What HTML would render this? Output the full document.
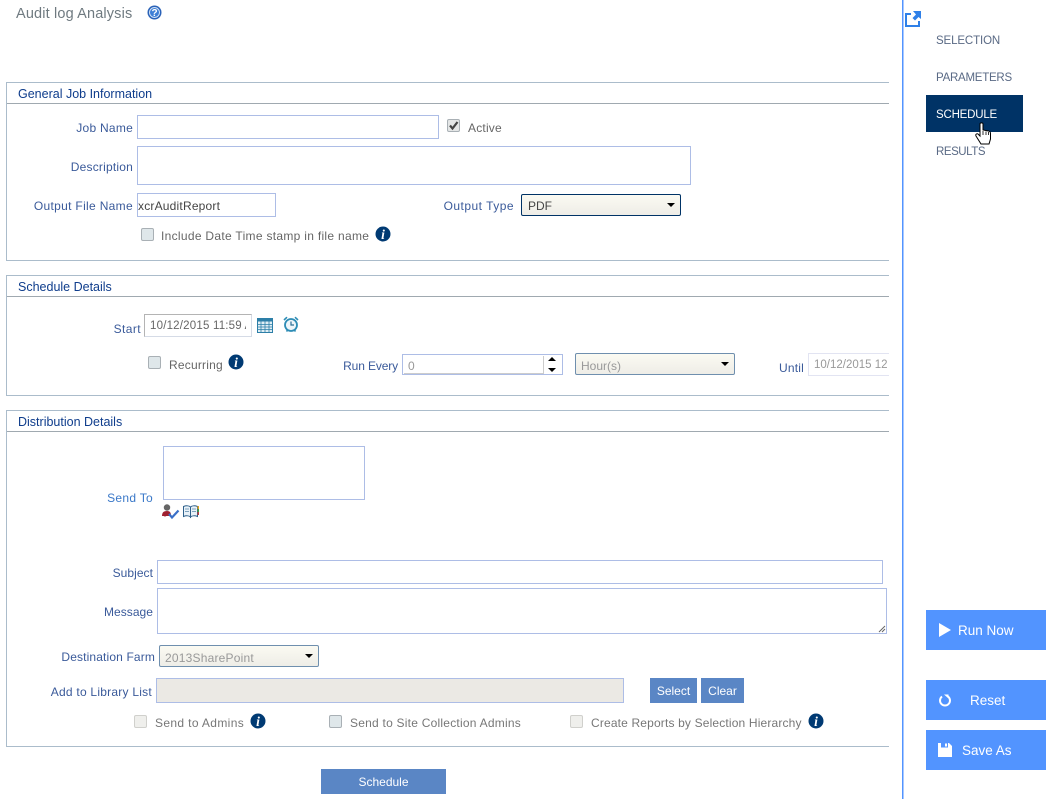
<!DOCTYPE html>
<html><head><meta charset="utf-8"><style>
html,body{margin:0;padding:0;background:#fff}
body{width:1054px;height:799px;position:relative;overflow:hidden;font-family:"Liberation Sans",sans-serif;font-size:12px;color:#555}
.t{position:absolute;white-space:nowrap;line-height:16px;height:16px}
.l{color:#3a5a9a;text-align:right}
.g{color:#666}
.h{color:#0f3d8c;font-size:12.5px}
.b{position:absolute;box-sizing:border-box;border:1px solid #adbde6;background:#fff}
.sec{position:absolute;left:6px;width:883px;box-sizing:border-box;border:1px solid #abbccb;border-right:0}
.hl{position:absolute;left:0;right:0;height:1px;background:#a0a9b0}
.cb{position:absolute;box-sizing:border-box;width:13px;height:13px;border:1px solid #a9b0b5;border-radius:2px;background:#dfe7ea}
.cb.d{background:#efefec;border-color:#d0d0cc}
.sel{position:absolute;box-sizing:border-box;border:1px solid #003366;border-radius:2px;background:linear-gradient(#fbfaf2,#eeede7);height:22px}
.sel.o{border-color:#6f8fae}
.arr{position:absolute;right:5px;top:8px;width:0;height:0;border:4px solid transparent;border-top:4px solid #000;border-bottom:0}
.btn{position:absolute;background:#5a86c5;color:#fff;text-align:center;font-size:12px}
.side{position:absolute;left:926px;width:120px;height:40px;background:#5294ff;color:#fff;font-size:13.5px;line-height:41px}
.side span{position:absolute;top:0;white-space:nowrap}
svg{position:absolute;overflow:visible}
.nav{position:absolute;left:936px;color:#5a6a85;font-size:11.5px;line-height:16px;white-space:nowrap}
</style></head><body>

<div class="t" style="left:16px;top:5px;font-size:14.5px;line-height:18px;height:18px;color:#6f7a80;letter-spacing:.15px">Audit log Analysis</div>
<svg style="left:147px;top:5px" width="15" height="15" viewBox="0 0 15 15"><circle cx="7.5" cy="7.5" r="7" fill="#2a62b8"/><circle cx="7.5" cy="7.5" r="5" fill="#3f7fd6" stroke="#cfe0f5" stroke-width="1"/><text x="7.5" y="11" text-anchor="middle" font-size="10" font-weight="700" fill="#fff" font-family="Liberation Sans">?</text></svg>

<!-- Section 1 -->
<div class="sec" style="top:82px;height:179px"><div class="hl" style="top:20px"></div></div>
<div class="t h" style="left:18px;top:86px">General Job Information</div>
<div class="t l" style="right:921px;top:120px;letter-spacing:.25px">Job Name</div>
<div class="b" style="left:137px;top:115px;width:302px;height:24px"></div>
<div class="cb" style="left:447px;top:119px;background:#e4e6e6"></div>
<svg style="left:447px;top:119px" width="13" height="13" viewBox="0 0 13 13"><path d="M3 6.5 L5.500 9.500 L10.500 3" fill="none" stroke="#444" stroke-width="2.2"/></svg>
<div class="t g" style="left:468px;top:120px;letter-spacing:.2px">Active</div>
<div class="t l" style="right:921px;top:159px;letter-spacing:.2px">Description</div>
<div class="b" style="left:137px;top:146px;width:554px;height:39px"></div>
<div class="t l" style="right:921px;top:198px;letter-spacing:.32px">Output File Name</div>
<div class="b" style="left:137px;top:193px;width:139px;height:24px"></div>
<div class="t" style="left:138px;top:198px;color:#444;letter-spacing:.2px">xcrAuditReport</div>
<div class="t l" style="right:540px;top:198px;letter-spacing:.48px">Output Type</div>
<div class="sel" style="left:521px;top:194px;width:160px"><div class="t" style="left:6px;top:3px;color:#444">PDF</div><div class="arr"></div></div>
<div class="cb" style="left:141px;top:228px"></div>
<div class="t g" style="left:161px;top:228px;letter-spacing:.3px">Include Date Time stamp in file name</div>
<svg style="left:375px;top:226px" width="16" height="16" viewBox="0 0 16 16"><circle cx="8" cy="8" r="7.500" fill="#003a73"/><text x="8" y="12.800" text-anchor="middle" font-size="13.500" font-weight="700" font-style="italic" fill="#fff" font-family="Liberation Serif">i</text></svg>

<!-- Section 2 -->
<div class="sec" style="top:275px;height:121px"><div class="hl" style="top:20px"></div></div>
<div class="t h" style="left:18px;top:279px">Schedule Details</div>
<div class="t l" style="right:913px;top:321px;letter-spacing:.4px">Start</div>
<div class="b" style="left:144px;top:314px;width:108px;height:23px;border-color:#b4b4b4 #d5dbe6 #d5dbe6 #b4b4b4"><div style="position:absolute;left:5px;top:3px;width:96px;height:16px;overflow:hidden"><div class="t" style="left:0;top:0;color:#666;font-size:11.5px;letter-spacing:.2px">10/12/2015 11:59 A</div></div></div>
<svg style="left:257px;top:318px" width="16" height="15" viewBox="0 0 16 15"><rect x=".5" y=".5" width="15" height="14" fill="#dfeef5" stroke="#2d7fa8"/><rect x=".5" y=".5" width="15" height="3" fill="#2d7fa8"/><path d="M4 3.500V14M8 3.500V14M12 3.500V14M1 6.500H15M1 9H15M1 11.500H15" stroke="#2d7fa8" stroke-width=".8"/></svg>
<svg style="left:283px;top:316px" width="16" height="17" viewBox="0 0 16 17"><circle cx="8" cy="9" r="6" fill="#eef6fa" stroke="#2d8cb5" stroke-width="1.800"/><path d="M8 5.500V9H11" fill="none" stroke="#2d6f95" stroke-width="1.200"/><path d="M1 4 L4 1.200M15 4 L12 1.200M3.500 15.500l1.500-2M12.500 15.500l-1.500-2" stroke="#2d8cb5" stroke-width="1.600"/></svg>
<div class="cb" style="left:148px;top:356px"></div>
<div class="t g" style="left:169px;top:357px;letter-spacing:.2px">Recurring</div>
<svg style="left:228px;top:354px" width="16" height="16" viewBox="0 0 16 16"><circle cx="8" cy="8" r="7.500" fill="#003a73"/><text x="8" y="12.800" text-anchor="middle" font-size="13.500" font-weight="700" font-style="italic" fill="#fff" font-family="Liberation Serif">i</text></svg>
<div class="t l" style="right:656px;top:358px;letter-spacing:-.13px">Run Every</div>
<div class="b" style="left:402px;top:354px;width:161px;height:21px;border-color:#adbde6"></div>
<div style="position:absolute;left:404px;top:356px;width:139px;height:17px;border:0 solid #ccc;border-bottom:1px solid #ccc;border-right:1px solid #ccc"></div>
<div class="t" style="left:408px;top:358px;color:#999">0</div>
<div style="position:absolute;left:548px;top:357px;border:4px solid transparent;border-bottom:4px solid #000;border-top:0;width:0;height:0"></div>
<div style="position:absolute;left:548px;top:368px;border:4px solid transparent;border-top:4px solid #000;border-bottom:0;width:0;height:0"></div>
<div class="sel o" style="left:575px;top:353px;width:160px"><div class="t" style="left:5px;top:4px;color:#999">Hour(s)</div><div class="arr"></div></div>
<div class="t l" style="right:250px;top:360px;letter-spacing:.2px">Until</div>
<div class="b" style="left:808px;top:353px;width:81px;height:23px;border-color:#e2e4f2;border-right:0;overflow:hidden"><div class="t" style="left:5px;top:3px;color:#999;font-size:11.500px">10/12/2015 12</div></div>

<!-- Section 3 -->
<div class="sec" style="top:410px;height:337px"><div class="hl" style="top:20px"></div></div>
<div class="t h" style="left:18px;top:414px">Distribution Details</div>
<div class="t l" style="right:901px;top:490px;letter-spacing:.3px;color:#3a78c8">Send To</div>
<div class="b" style="left:163px;top:446px;width:202px;height:54px"></div>
<svg style="left:162px;top:504px" width="18" height="15" viewBox="0 0 18 15"><circle cx="5" cy="3.500" r="3.200" fill="#666"/><path d="M0 12c0-3.500 2-5 5-5s4 1.500 4 5z" fill="#a02030"/><circle cx="3" cy="10" r="2.500" fill="#a02030"/><path d="M7 10l3 3.500 6.500-7" fill="none" stroke="#3a6fc8" stroke-width="2.200"/></svg>
<svg style="left:183px;top:505px" width="16" height="13" viewBox="0 0 16 13"><path d="M.5 1.500C3 .5 6 .5 7.500 2v10C6 10.500 3 10.500 .5 11.500zM14.500 1.500C12 .5 9 .5 7.500 2v10c1.500-1.500 4.500-1.500 7-.5z" fill="#e8f1f8" stroke="#2d5f8a"/><path d="M2 4h4M2 6.500h4M9 4h4M9 6.500h4" stroke="#5a86a8" stroke-width=".8"/><rect x="14.500" y="1" width="1.500" height="3" fill="#e0a020"/><rect x="14.500" y="4" width="1.500" height="3" fill="#40a040"/><rect x="14.500" y="7" width="1.500" height="3" fill="#c04040"/></svg>
<div class="t l" style="right:901px;top:565px;letter-spacing:.05px">Subject</div>
<div class="b" style="left:157px;top:560px;width:726px;height:24px"></div>
<div class="t l" style="right:901px;top:604px;letter-spacing:.05px">Message</div>
<div class="b" style="left:157px;top:588px;width:730px;height:46px"></div>
<svg style="left:878px;top:625px" width="8" height="8" viewBox="0 0 8 8"><path d="M7 1 L1 7M7 4 L4 7" stroke="#666" stroke-width="1"/></svg>
<div class="t l" style="right:899px;top:649px;letter-spacing:.14px">Destination Farm</div>
<div class="sel o" style="left:159px;top:645px;width:160px"><div class="t" style="left:5px;top:4px;color:#999;letter-spacing:.2px">2013SharePoint</div><div class="arr"></div></div>
<div class="t l" style="right:902px;top:684px;letter-spacing:.24px">Add to Library List</div>
<div class="b" style="left:156px;top:678px;width:468px;height:25px;background:#ebe9e4"></div>
<div class="btn" style="left:650px;top:678px;width:47px;height:25px;line-height:26px">Select</div>
<div class="btn" style="left:701px;top:678px;width:43px;height:25px;line-height:26px">Clear</div>
<div class="cb d" style="left:134px;top:715px"></div>
<div class="t g" style="left:155px;top:715px;letter-spacing:.36px;color:#777">Send to Admins</div>
<svg style="left:250px;top:713px" width="16" height="16" viewBox="0 0 16 16"><circle cx="8" cy="8" r="7.500" fill="#003a73"/><text x="8" y="12.800" text-anchor="middle" font-size="13.500" font-weight="700" font-style="italic" fill="#fff" font-family="Liberation Serif">i</text></svg>
<div class="cb" style="left:329px;top:715px"></div>
<div class="t g" style="left:350px;top:715px;letter-spacing:.23px;color:#777">Send to Site Collection Admins</div>
<div class="cb d" style="left:570px;top:715px"></div>
<div class="t g" style="left:591px;top:715px;letter-spacing:.16px;color:#777">Create Reports by Selection Hierarchy</div>
<svg style="left:808px;top:713px" width="16" height="16" viewBox="0 0 16 16"><circle cx="8" cy="8" r="7.500" fill="#003a73"/><text x="8" y="12.800" text-anchor="middle" font-size="13.500" font-weight="700" font-style="italic" fill="#fff" font-family="Liberation Serif">i</text></svg>
<div class="btn" style="left:321px;top:769px;width:125px;height:25px;line-height:27px">Schedule</div>

<!-- Right rail -->
<div style="position:absolute;left:902px;top:0;width:1px;height:799px;background:#5294ff;border-right:1px solid #a8c8ff"></div>
<svg style="left:905px;top:11px" width="16" height="16" viewBox="0 0 16 16"><path d="M6 3H1v12h13V10" fill="none" stroke="#2f80e8" stroke-width="2"/><path d="M8 0h8v8l-2.500-2-3.500 3.500-2.500-2.500 3.500-3.500z" fill="#2f80e8"/></svg>
<div class="nav" style="top:33px;letter-spacing:-.12px">SELECTION</div>
<div class="nav" style="top:70px;letter-spacing:-.25px">PARAMETERS</div>
<div style="position:absolute;left:926px;top:95px;width:97px;height:37px;background:#003366"></div>
<div class="nav" style="top:107px;color:#fff;letter-spacing:-.2px">SCHEDULE</div>
<div class="nav" style="top:144px;letter-spacing:-.45px">RESULTS</div>
<svg style="left:975px;top:122px" width="17" height="23" viewBox="0 0 17 23"><path d="M5 2c0-1.500 3-1.500 3 0v6l5.500 1c1.500.3 2 1 2 2.500V17l-1.500 5H6L1 14c-1-2 1.500-3 2.500-1.500L5 14z" fill="#fff" stroke="#000" stroke-width="1"/><path d="M8 9v4M11 9.500V13M13.500 10v3" stroke="#000" stroke-width=".8"/></svg>

<div class="side" style="top:610px"><svg style="left:12px;top:12px" width="14" height="16" viewBox="0 0 14 16"><path d="M1 1L13 8L1 15z" fill="#fff"/></svg><span style="left:32px">Run Now</span></div>
<div class="side" style="top:680px"><svg style="left:12px;top:13px" width="14" height="14" viewBox="0 0 14 14"><path d="M4 3.500a5 5 0 1 0 6 0" fill="none" stroke="#fff" stroke-width="2"/><path d="M6 1.500h4.500v4z" fill="#fff"/></svg><span style="left:44px">Reset</span></div>
<div class="side" style="top:730px"><svg style="left:12px;top:13px" width="14" height="14" viewBox="0 0 14 14"><path d="M0 0h11l3 3v11H0z" fill="#fff"/><rect x="3" y="0" width="7" height="4.500" fill="#5294ff"/><rect x="7" y=".5" width="2" height="3" fill="#fff"/></svg><span style="left:36px">Save As</span></div>

</body></html>
